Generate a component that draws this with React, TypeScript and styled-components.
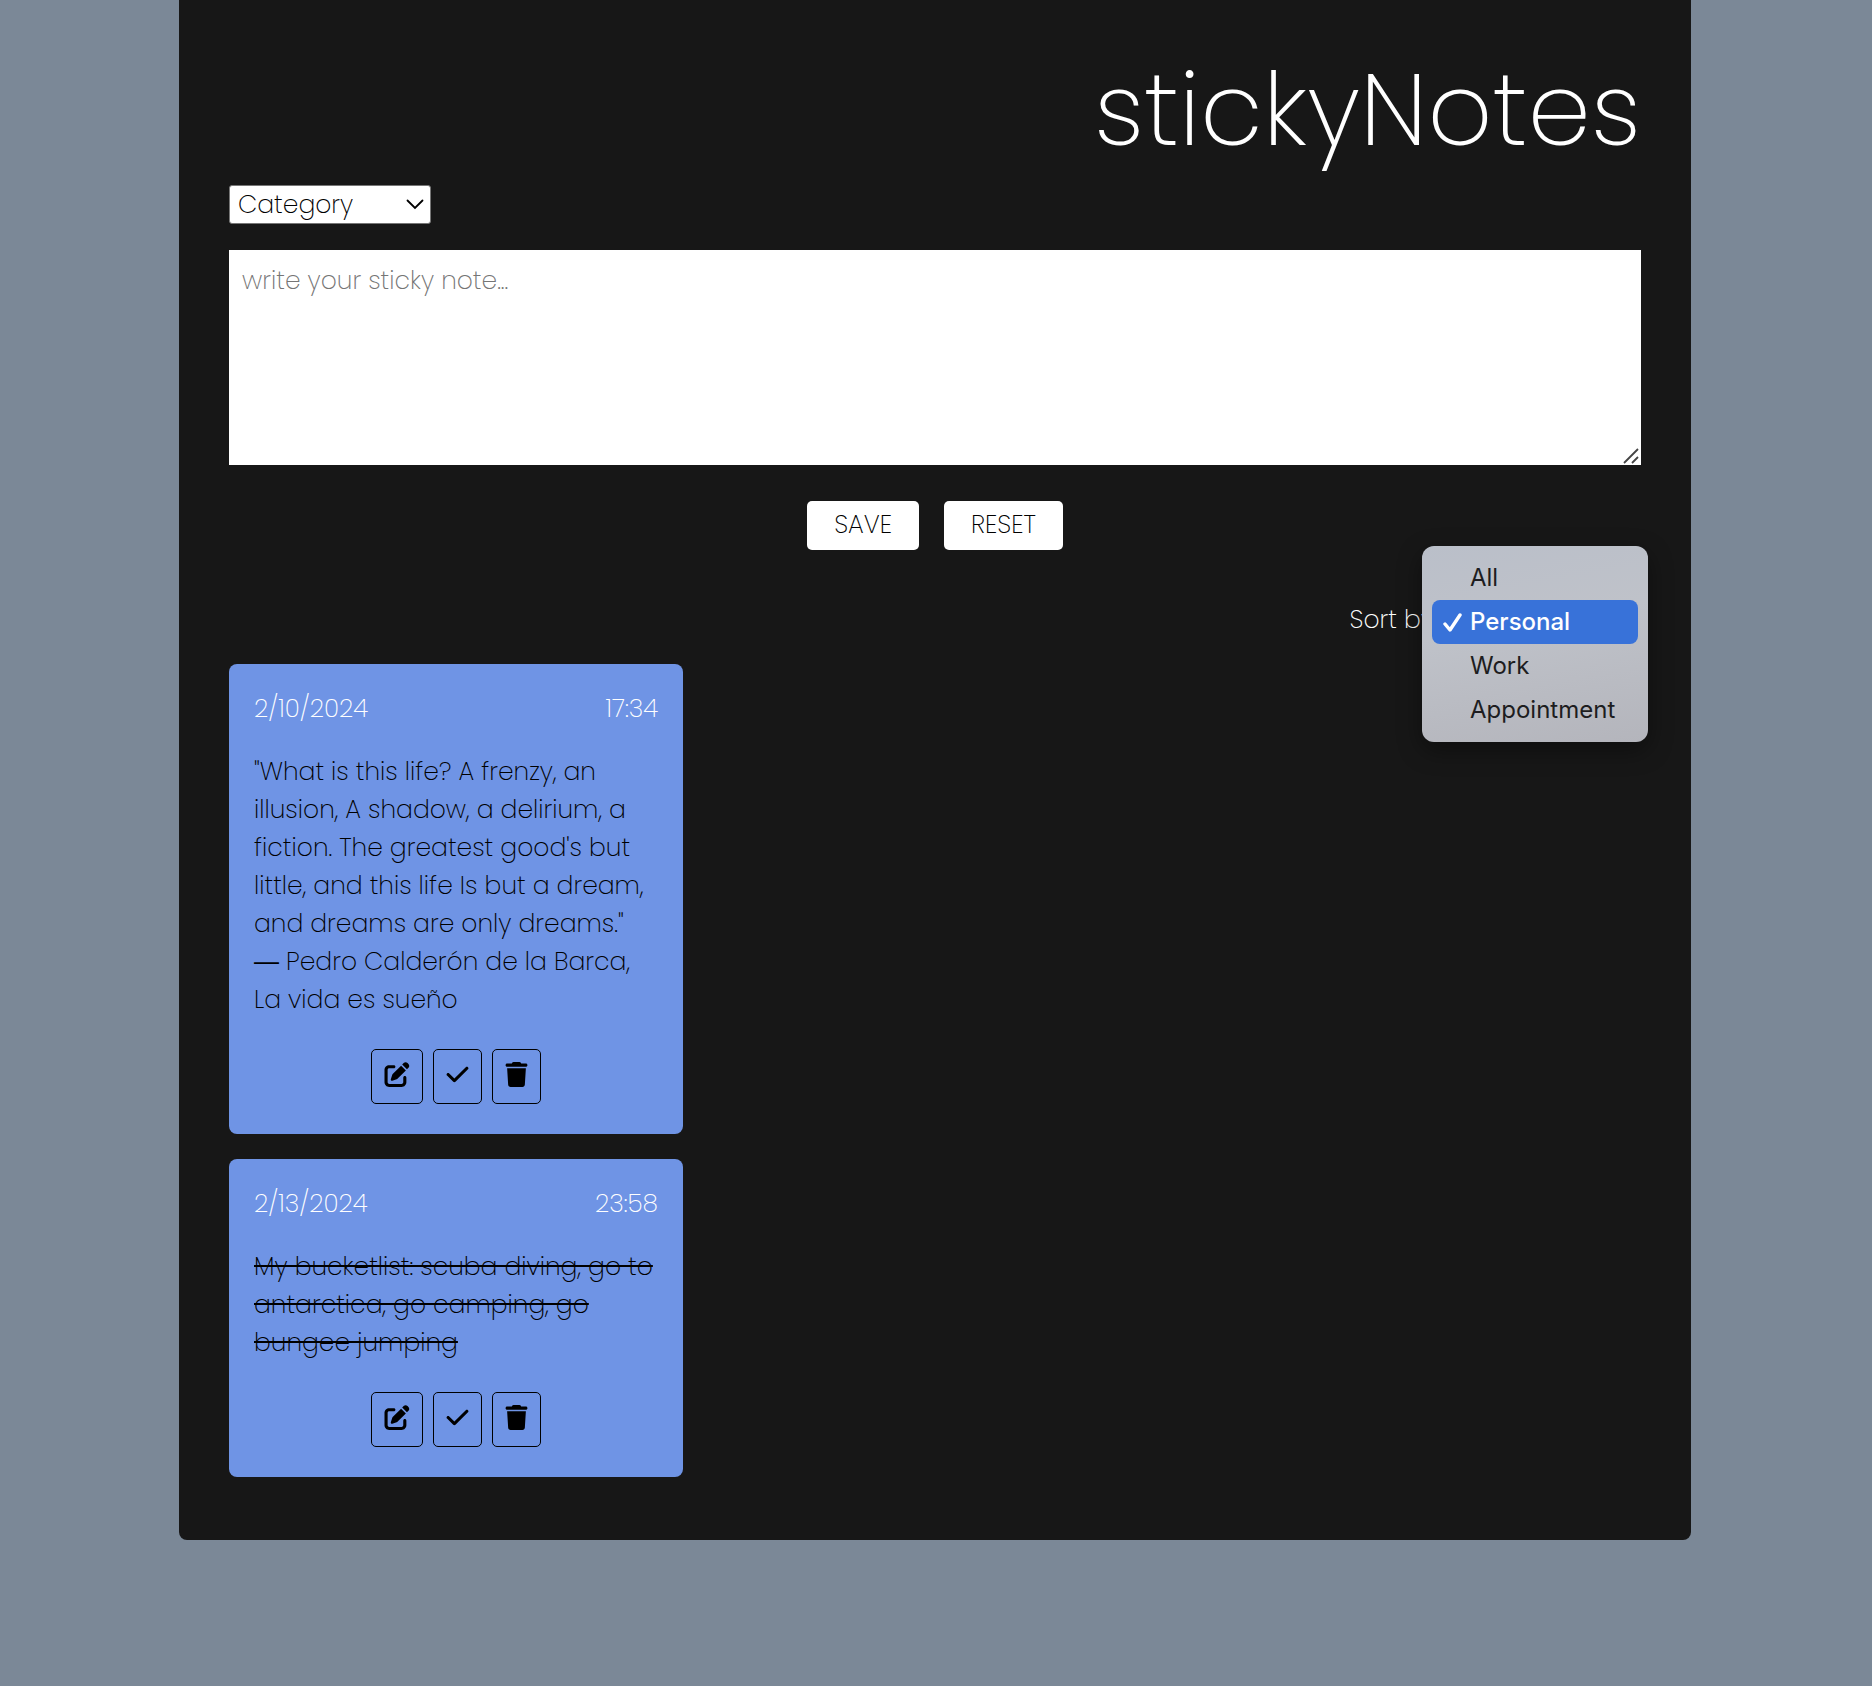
import React, { useState } from 'react';
import styled, { createGlobalStyle } from 'styled-components';
import { FaPenToSquare, FaCheck, FaTrash } from 'react-icons/fa6';

const bodyFont = "'Poppins ExtraLight', Poppins, 'Liberation Sans', sans-serif";

const GlobalStyle = createGlobalStyle`
  *, *::before, *::after { box-sizing: border-box; }
  body {
    margin: 0;
    background: #7b8897;
    font-family: ${bodyFont};
    font-size: 25px;
    font-weight: 200;
    line-height: 38px;
  }
  button, select, textarea { font: inherit; }
`;

const Page = styled.div`
  min-height: 100vh;
  padding: 0 181px 146px 179px;
`;

const Panel = styled.main`
  padding: 50px 50px 63px;
  border-radius: 0 0 8px 8px;
  background: #171717;
  color: #fff;
`;

const Title = styled.h1`
  margin: 0;
  font-size: 101px;
  font-weight: 200;
  line-height: 120px;
  text-align: right;
`;

const SelectBox = styled.div`
  position: relative;
  width: 202px;
  margin-top: 15px;
`;

const Select = styled.select`
  display: block;
  width: 100%;
  height: 39px;
  padding: 0 8px;
  border: 1px solid #767676;
  border-radius: 3px;
  background: #fff;
  color: #000;
  appearance: none;
`;

const Chevron = styled.svg`
  position: absolute;
  top: 14px;
  right: 7px;
  pointer-events: none;
`;

const NoteBox = styled.div`
  position: relative;
  margin-top: 26px;
`;

const NoteInput = styled.textarea`
  display: block;
  width: 100%;
  height: 215px;
  padding: 12px 13px;
  border: 0;
  background: #fff;
  color: #000;
  resize: none;
  &::placeholder { color: #757575; opacity: 1; }
`;

const Grip = styled.svg`
  position: absolute;
  right: 2px;
  bottom: 1px;
  pointer-events: none;
`;

const FormActions = styled.div`
  display: flex;
  justify-content: center;
  gap: 25px;
  margin-top: 36px;
`;

const FormButton = styled.button`
  height: 49px;
  padding: 0 27px 2px;
  border: 0;
  border-radius: 5px;
  background: #fff;
  color: #000;
  text-transform: uppercase;
`;

const SortRow = styled.div`
  position: relative;
  display: flex;
  justify-content: flex-end;
  gap: 5px;
  margin-top: 51px;
`;

const SortValue = styled.div`
  position: relative;
  width: 202px;
`;

const Menu = styled.ul`
  position: absolute;
  top: -55px;
  right: -7px;
  width: 226px;
  margin: 0;
  padding: 10px;
  border-radius: 12px;
  list-style: none;
  background: linear-gradient(170deg, #babfc9 0%, #bfc2c9 40%, #b4b5bc 100%);
  box-shadow: 0 8px 24px rgba(0, 0, 0, 0.4);
  font-family: Inter, 'Liberation Sans', sans-serif;
  font-size: 24px;
`;

const Option = styled.li<{ $selected: boolean }>`
  display: grid;
  grid-template-columns: 20px 1fr;
  align-items: center;
  gap: 8px;
  height: 44px;
  padding-left: 10px;
  border-radius: 8px;
  background: ${(p) => (p.$selected ? '#3872d9' : 'transparent')};
  color: ${(p) => (p.$selected ? '#fff' : '#1d1d20')};
  font-weight: ${(p) => (p.$selected ? 500 : 400)};
  cursor: default;
`;

const Notes = styled.section`
  display: grid;
  grid-template-columns: repeat(3, 1fr);
  gap: 25px;
  margin-top: 25px;
`;

const Note = styled.article`
  grid-column: 1;
  padding: 26px 25px 30px;
  border-radius: 8px;
  background: #6f94e5;
`;

const Stamp = styled.header`
  display: flex;
  justify-content: space-between;
`;

const NoteText = styled.p<{ $done: boolean }>`
  margin: 25px 0 30px;
  color: #000;
  white-space: pre-line;
  text-decoration: ${(p) => (p.$done ? 'line-through' : 'none')};
  text-decoration-thickness: 2px;
`;

const NoteActions = styled.div`
  display: flex;
  justify-content: center;
  gap: 10px;
`;

const IconButton = styled.button<{ $iconWidth: number }>`
  display: flex;
  align-items: center;
  height: 55px;
  padding: 0 12px 4px;
  border: 1px solid #000;
  border-radius: 5px;
  background: transparent;
  color: #000;
  svg { width: ${(p) => p.$iconWidth}px; height: 25px; }
`;

const notes = [
  {
    date: '2/10/2024',
    time: '17:34',
    done: false,
    text: '"What is this life? A frenzy, an illusion, A shadow, a delirium, a fiction. The greatest good\'s but little, and this life Is but a dream, and dreams are only dreams."\n― Pedro Calderón de la Barca, La vida es sueño',
  },
  {
    date: '2/13/2024',
    time: '23:58',
    done: true,
    text: 'My bucketlist: scuba diving, go to antarctica, go camping, go bungee jumping',
  },
];

const filters = ['All', 'Personal', 'Work', 'Appointment'];

export default function App() {
  const [filter, setFilter] = useState('Personal');
  const [draft, setDraft] = useState('');
  return (
    <>
      <GlobalStyle />
      <Page>
        <Panel>
          <Title>stickyNotes</Title>
          <SelectBox>
            <Select aria-label="Category" defaultValue="Category">
              <option>Category</option>
              {filters.slice(1).map((f) => <option key={f}>{f}</option>)}
            </Select>
            <Chevron width="18" height="11" viewBox="0 0 18 11" fill="none" stroke="#000" strokeWidth="1.8" strokeLinecap="round" aria-hidden="true">
              <path d="M1.5 1.5L9 9l7.500-7.500" />
            </Chevron>
          </SelectBox>
          <NoteBox>
            <NoteInput
              aria-label="Sticky note"
              placeholder="write your sticky note..."
              value={draft}
              onChange={(e) => setDraft(e.target.value)}
            />
            <Grip width="16" height="16" viewBox="0 0 16 16" stroke="#444" strokeWidth="1.8" aria-hidden="true">
              <path d="M1 15L15 1M9 15l6-6" />
            </Grip>
          </NoteBox>
          <FormActions>
            <FormButton type="button">Save</FormButton>
            <FormButton type="button" onClick={() => setDraft('')}>Reset</FormButton>
          </FormActions>
          <SortRow>
            <span id="sort-label">Sort by</span>
            <SortValue>
              <Menu role="listbox" aria-labelledby="sort-label">
                {filters.map((f) => (
                  <Option key={f} role="option" aria-selected={f === filter} $selected={f === filter} onClick={() => setFilter(f)}>
                    {f === filter ? (
                      <svg width="20" height="20" viewBox="0 0 20 20" fill="none" stroke="currentColor" strokeWidth="3.4" strokeLinecap="round" strokeLinejoin="round" aria-hidden="true">
                        <path d="M3 12l5 6L18 3" />
                      </svg>
                    ) : <span />}
                    {f}
                  </Option>
                ))}
              </Menu>
            </SortValue>
          </SortRow>
          <Notes>
            {notes.map((n) => (
              <Note key={n.date}>
                <Stamp>
                  <span>{n.date}</span>
                  <span>{n.time}</span>
                </Stamp>
                <NoteText $done={n.done}>{n.text}</NoteText>
                <NoteActions>
                  <IconButton type="button" aria-label="Edit" $iconWidth={26}><FaPenToSquare /></IconButton>
                  <IconButton type="button" aria-label="Mark as done" $iconWidth={23}><FaCheck /></IconButton>
                  <IconButton type="button" aria-label="Delete" $iconWidth={23}><FaTrash /></IconButton>
                </NoteActions>
              </Note>
            ))}
          </Notes>
        </Panel>
      </Page>
    </>
  );
}
